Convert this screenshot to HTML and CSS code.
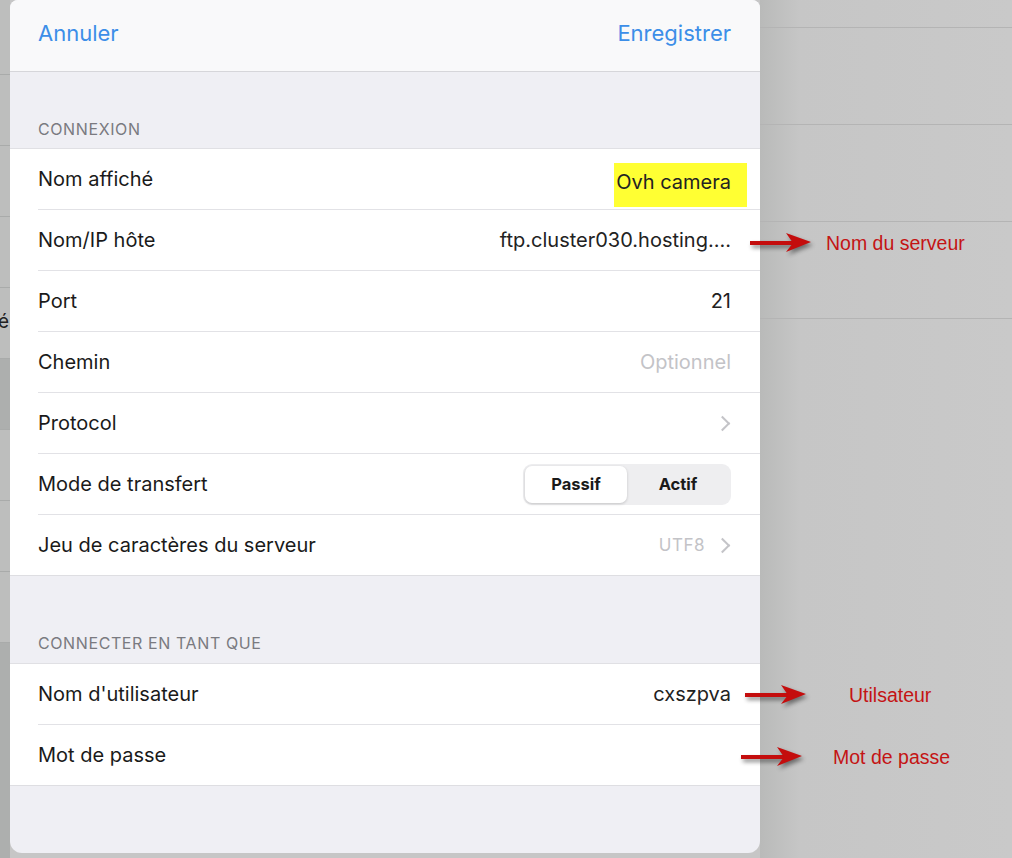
FILE: index.html
```html
<!DOCTYPE html>
<html>
<head lang="fr">
    <meta charset="UTF-8">
    <title>Connexion FTP</title>
    <link rel="stylesheet" href="styles.css">
</head>
<body>
<div class="screen">
    <!-- bande grise a gauche -->
    <div class="side-left">
        <div class="cell"></div>
        <div class="cell"></div>
        <div class="cell"></div>
        <div class="cell"></div>
        <div class="cell"><span class="cut">é</span></div>
        <div class="cell dark"></div>
        <div class="cell"></div>
        <div class="cell"></div>
        <div class="cell"></div>
        <div class="cell dark last"></div>
    </div>

    <div class="sheet">
        <div class="nav">
            <span class="nav-btn">Annuler</span>
            <span class="nav-btn">Enregistrer</span>
        </div>

        <div class="section-title first">CONNEXION</div>
        <ul class="group">
            <li class="row"><span class="label">Nom affiché</span><span class="value mark">Ovh camera</span></li>
            <li class="row"><span class="label">Nom/IP hôte</span><span class="value">ftp.cluster030.hosting....</span></li>
            <li class="row"><span class="label">Port</span><span class="value">21</span></li>
            <li class="row"><span class="label">Chemin</span><span class="value hint">Optionnel</span></li>
            <li class="row"><span class="label">Protocol</span><span class="chevron"></span></li>
            <li class="row">
                <span class="label">Mode de transfert</span>
                <div class="segment">
                    <span class="seg on">Passif</span>
                    <span class="seg">Actif</span>
                </div>
            </li>
            <li class="row"><span class="label">Jeu de caractères du serveur</span><span class="value hint small">UTF8</span><span class="chevron"></span></li>
        </ul>

        <div class="section-title">CONNECTER EN TANT QUE</div>
        <ul class="group">
            <li class="row"><span class="label">Nom d'utilisateur</span><span class="value">cxszpva</span></li>
            <li class="row"><span class="label">Mot de passe</span></li>
        </ul>
    </div>

    <div class="side-right">
        <div class="band top"></div>
        <div class="band"></div>
        <div class="band"></div>
        <div class="band"></div>
    </div>

    <!-- annotations -->
    <div class="note n1">
        <svg class="arrow" width="66" height="26" viewBox="0 0 66 26"><path d="M2 13 H46" stroke="#c40d0d" stroke-width="4"/><path d="M38 3 L63 12 L38 22 L45 13 Z" fill="#c40d0d"/></svg>
        <span class="note-text">Nom du serveur</span>
    </div>
    <div class="note n2">
        <svg class="arrow" width="66" height="26" viewBox="0 0 66 26"><path d="M2 13 H46" stroke="#c40d0d" stroke-width="4"/><path d="M38 3 L63 12 L38 22 L45 13 Z" fill="#c40d0d"/></svg>
        <span class="note-text">Utilsateur</span>
    </div>
    <div class="note n3">
        <svg class="arrow" width="66" height="26" viewBox="0 0 66 26"><path d="M2 13 H46" stroke="#c40d0d" stroke-width="4"/><path d="M38 3 L63 12 L38 22 L45 13 Z" fill="#c40d0d"/></svg>
        <span class="note-text">Mot de passe</span>
    </div>
</div>
</body>
</html>
```

FILE: styles.css
```css
body,div,ul,li,span { margin:0; padding:0; }
body { background:#c6c6c6; font-family: Inter, "Liberation Sans", Arial, sans-serif; color:#1c1c1c; overflow:hidden; }
ul,li { list-style:none; }

.screen{
    display: flex;
    width: 1012px;
    height: 858px;
    position: relative;
}

/* gauche */
.side-left{
    width: 10px;
    background-color: #bdbebd;
    display: flex;
    flex-direction: column;
}
.side-left .cell{
    height: 70px;
    border-bottom: 1px solid #a9abaa;
    position: relative;
    overflow: hidden;
}
.side-left .cell:first-child{ height: 74px; }
.side-left .dark{ background-color: #adafae; }
.side-left .last{ flex: 1; border-bottom: none; }
.cut{
    position: absolute;
    right: 1px;
    top: 22px;
    font-size: 19px;
    color: #222;
}

/* feuille */
.sheet{
    width: 750px;
    height: 853px;
    background-color: #efeff4;
    border-radius: 8px 8px 12px 12px;
    overflow: hidden;
}

.nav{
    height: 72px;
    background-color: #f9f9fa;
    border-bottom: 1px solid #d6d6da;
    display: flex;
    justify-content: space-between;
    align-items: center;
    padding: 0 29px 6px 28px;
    box-sizing: border-box;
}
.nav-btn{
    font-size: 22px;
    color: #3c8ee8;
}

.section-title{
    font-size: 16px;
    color: #7a7a80;
    padding: 55px 28px 8px;
    height: 24px;
    line-height: 24px;
    letter-spacing: 0.6px;
    border-bottom: 1px solid #e0e0e4;
}
.section-title.first{ padding-top: 45px; padding-bottom: 7px; }

.group{
    background-color: #fff;
    border-bottom: 1px solid #dedee2;
}

.row{
    height: 60px;
    margin-left: 28px;
    padding-right: 29px;
    border-bottom: 1px solid #e2e2e6;
    display: flex;
    align-items: center;
    gap: 8px;
}
.row:last-child{ border-bottom: none; }

.label{
    flex: 1;
    font-size: 20px;
    color: #1a1a1a;
}
.value{
    font-size: 20px;
    color: #222;
}
.hint{ color: #c3c3c7; }
.small{ font-size: 17px; letter-spacing: 0.5px; }

.mark{
    background-color: #ffff33;
    line-height: 24px;
    padding: 7px 16px 13px 2px;
    margin: 12px -16px 0 0;
}

.chevron{
    width: 9px;
    height: 9px;
    border-top: 2px solid #c4c4c8;
    border-right: 2px solid #c4c4c8;
    transform: rotate(45deg);
    margin-right: 3px;
    margin-left: 4px;
}

.segment{
    width: 208px;
    height: 41px;
    background-color: #eeeef0;
    border-radius: 9px;
    display: flex;
    padding: 2px;
    box-sizing: border-box;
}
.seg{
    flex: 1;
    display: flex;
    align-items: center;
    justify-content: center;
    font-size: 16.5px;
    font-weight: bold;
    color: #1a1a1a;
    border-radius: 7px;
}
.seg.on{
    background-color: #fff;
    box-shadow: 0 1px 3px rgba(0,0,0,0.18);
}

/* droite */
.side-right{
    flex: 1;
    background: linear-gradient(to right, #b9bab9, #c6c6c6 40px, #c9c9c9);
}
.band{
    height: 96px;
    border-bottom: 1px solid #b4b4b4;
}
.band.top{ height: 27px; }

/* annotations */
.note{
    position: absolute;
    display: flex;
    align-items: center;
}
.arrow{
    filter: drop-shadow(2px 3px 2px rgba(0,0,0,0.45));
}
.note-text{
    font-family: "Liberation Sans", Arial, sans-serif;
    font-size: 19.5px;
    color: #c41414;
}
.n1{ left: 748px; top: 230px; }
.n1 .note-text{ margin-left: 12px; }
.n2{ left: 743px; top: 682px; }
.n2 .note-text{ margin-left: 40px; }
.n3{ left: 739px; top: 744px; }
.n3 .note-text{ margin-left: 28px; }
```
